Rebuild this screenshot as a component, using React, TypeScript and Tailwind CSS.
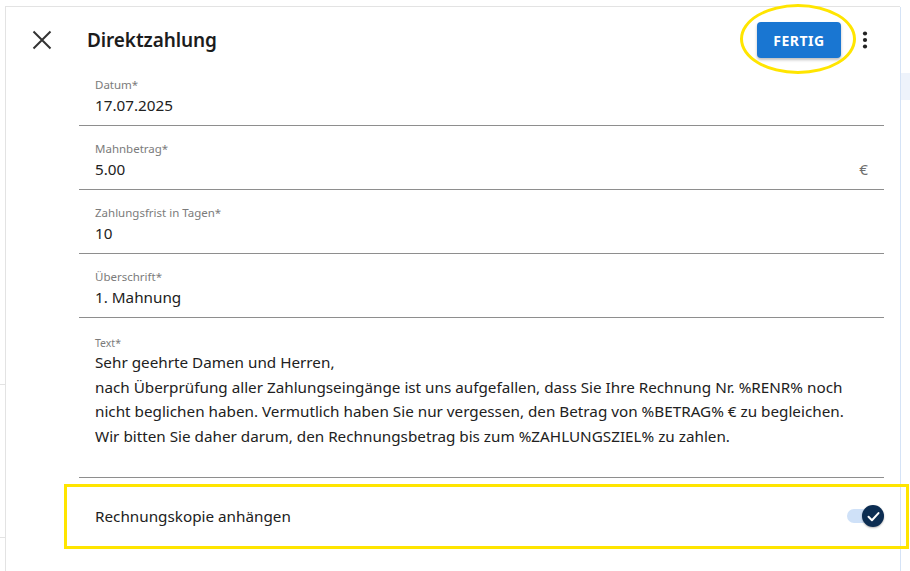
import { useState } from 'react';

type Field = { label: string; value: string; suffix?: string };

const fields: Field[] = [
  { label: 'Datum*', value: '17.07.2025' },
  { label: 'Mahnbetrag*', value: '5.00', suffix: '€' },
  { label: 'Zahlungsfrist in Tagen*', value: '10' },
  { label: 'Überschrift*', value: '1. Mahnung' },
];

const textLines = [
  'Sehr geehrte Damen und Herren,',
  'nach Überprüfung aller Zahlungseingänge ist uns aufgefallen, dass Sie Ihre Rechnung Nr. %RENR% noch',
  'nicht beglichen haben. Vermutlich haben Sie nur vergessen, den Betrag von %BETRAG% € zu begleichen.',
  'Wir bitten Sie daher darum, den Rechnungsbetrag bis zum %ZAHLUNGSZIEL% zu zahlen.',
];

function CloseIcon() {
  return (
    <svg width="24" height="24" viewBox="0 0 24 24" className="text-[#333]">
      <path d="M3.5 3.5 L20.5 20.5 M20.5 3.5 L3.5 20.5" stroke="currentColor" strokeWidth="2" fill="none" />
    </svg>
  );
}

function KebabIcon() {
  return (
    <svg width="24" height="24" viewBox="0 0 24 24" className="text-[#222]">
      <circle cx="12" cy="5.5" r="2.1" fill="currentColor" />
      <circle cx="12" cy="12" r="2.1" fill="currentColor" />
      <circle cx="12" cy="18.5" r="2.1" fill="currentColor" />
    </svg>
  );
}

function Toggle({ on, onChange }: { on: boolean; onChange: () => void }) {
  return (
    <button onClick={onChange} className="relative w-[37px] h-[22px]">
      <span className="absolute left-0 top-[4px] w-[32px] h-[14px] rounded-full bg-[#cfe1f8]" />
      <span className="absolute right-0 top-0 w-[22px] h-[22px] rounded-full bg-[#0c2d52] shadow-[0_1px_2px_rgba(0,0,0,0.3)] flex items-center justify-center">
        {on && (
          <svg width="15" height="15" viewBox="0 0 24 24">
            <path d="M4 12.5 L9.5 18 L20 6.5" stroke="white" strokeWidth="3.2" fill="none" strokeLinecap="round" strokeLinejoin="round" />
          </svg>
        )}
      </span>
    </button>
  );
}

export default function App() {
  const [attach, setAttach] = useState(true);

  return (
    <div className="relative flex w-[910px] h-[571px] bg-white overflow-hidden font-['Noto_Sans',sans-serif] text-[#212121]">
      {/* page behind the dialog */}
      <div className="w-[5px] flex flex-col">
        <div className="h-[385px] border-b border-[#e3e3e3]" />
        <div className="h-[153px] border-b border-[#e3e3e3]" />
      </div>

      {/* dialog */}
      <div className="w-[895px] mt-[6px] border-l border-t border-[#e3e3e3] flex flex-col">
        <div className="h-[55px] pt-[11px] flex items-center pl-[24px] pr-[23px]">
          <button><CloseIcon /></button>
          <h1 className="ml-[33px] text-[19px] font-semibold tracking-[-0.1px] text-[#1c1c1c]">Direktzahlung</h1>
          <div className="ml-auto flex items-center gap-[12px]">
            <button className="h-[36px] w-[84px] rounded-[4px] bg-[#1976d2] text-white text-[14px] font-bold tracking-[0.5px] shadow-[0_2px_3px_rgba(0,0,0,0.25)]">
              FERTIG
            </button>
            <button><KebabIcon /></button>
          </div>
        </div>

        <div className="ml-[73px] w-[805px]">
          {fields.map((f) => (
            <div key={f.label} className="h-[64px] border-b border-[#8e8e8e] pl-[16px] pr-[16px] pt-[15px]">
              <div className="text-[11.5px] leading-[16px] text-[#7b7b7b]">{f.label}</div>
              <div className="flex justify-between text-[15.25px] leading-[24px]">
                <span>{f.value}</span>
                {f.suffix && <span className="text-[#6f6f6f]">{f.suffix}</span>}
              </div>
            </div>
          ))}

          <div className="h-[160px] border-b border-[#8e8e8e] pl-[16px] pt-[18px]">
            <div className="text-[10.5px] leading-[14px] text-[#7b7b7b]">Text*</div>
            <div className="text-[15.25px] leading-[24.5px] whitespace-nowrap">
              {textLines.map((l) => (
                <div key={l}>{l}</div>
              ))}
            </div>
          </div>

          <div className="h-[76px] flex items-center justify-between pl-[16px]">
            <span className="text-[15.25px]">Rechnungskopie anhängen</span>
            <Toggle on={attach} onChange={() => setAttach(!attach)} />
          </div>
        </div>
      </div>

      {/* page behind, right side */}
      <div className="flex-1 mt-[7px] border-l border-[#d5e3f6] flex flex-col">
        <div className="h-[66px]" />
        <div className="h-[27px] bg-[#eef3fb]" />
      </div>

      {/* yellow annotations */}
      <div className="absolute left-[740px] top-[4px] w-[116px] h-[70px] rounded-[50%] border-[3px] border-[#ffe500]" />
      <div className="absolute left-[64px] top-[484px] w-[845px] h-[65px] border-[3px] border-[#ffe500]" />
    </div>
  );
}
